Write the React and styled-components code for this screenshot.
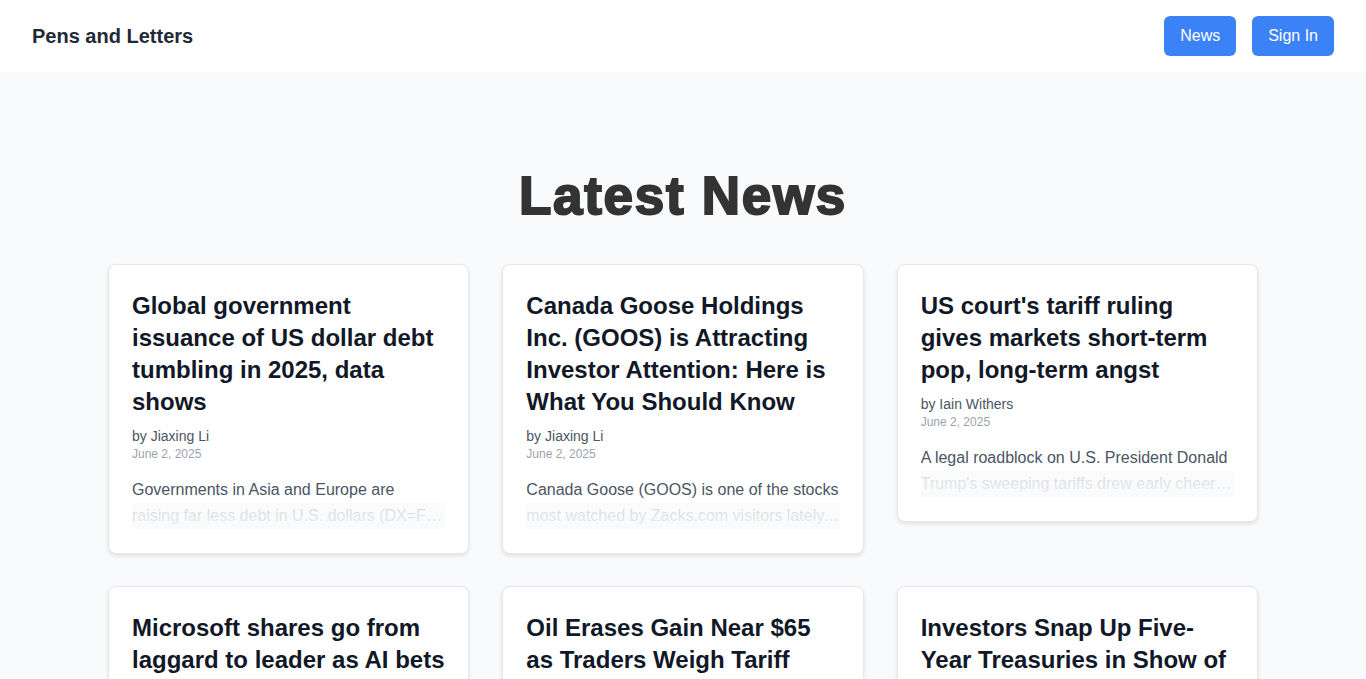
import styled, { createGlobalStyle } from 'styled-components';

const GlobalStyle = createGlobalStyle`
  * {
    box-sizing: border-box;
  }

  body {
    margin: 0;
    background-color: #f9fafb;
    font-family: 'Liberation Sans', Arial, sans-serif;
  }
`;

const Header = styled.header`
  display: flex;
  align-items: center;
  justify-content: space-between;
  height: 72px;
  padding: 0 32px;
  background-color: #ffffff;
`;

const Brand = styled.div`
  font-size: 20px;
  font-weight: 700;
  color: #1f2937;
`;

const Nav = styled.nav`
  display: flex;
  gap: 16px;
`;

const NavButton = styled.button`
  font-family: inherit;
  font-size: 16px;
  line-height: 24px;
  padding: 8px 16px;
  border: 0;
  border-radius: 6px;
  background-color: #3b82f6;
  color: #ffffff;
  cursor: pointer;
`;

const Main = styled.main`
  padding: 93px 108px 48px;
`;

// heavy display weight: thicken the bold face with a stroke
const PageTitle = styled.h1`
  margin: 0 0 38px;
  text-align: center;
  font-size: 53px;
  font-weight: 700;
  letter-spacing: 1.7px;
  color: #333333;
  -webkit-text-stroke: 2px #333333;
`;

const Grid = styled.div`
  display: grid;
  grid-template-columns: repeat(3, 1fr);
  gap: 32px 33px;
  align-items: start;
`;

const Card = styled.article`
  background-color: #ffffff;
  border: 1px solid #e5e7eb;
  border-radius: 8px;
  box-shadow: 0 2px 4px rgba(0, 0, 0, 0.1);
  padding: 25px 23px 24px;
`;

const CardTitle = styled.h2`
  margin: 0;
  font-size: 24px;
  line-height: 32px;
  font-weight: 700;
  color: #111827;
`;

const Author = styled.div`
  margin-top: 8px;
  font-size: 14px;
  line-height: 20px;
  color: #4b5563;
`;

const DateLine = styled.div`
  font-size: 12px;
  line-height: 16px;
  color: #9ca3af;
`;

const Excerpt = styled.div`
  position: relative;
  margin-top: 15px;
  font-size: 16px;
  line-height: 26px;
  color: #4b5563;
`;

const ExcerptText = styled.p`
  margin: 0;
  display: -webkit-box;
  -webkit-line-clamp: 2;
  -webkit-box-orient: vertical;
  overflow: hidden;
`;

const Fade = styled.div`
  position: absolute;
  left: 0;
  right: 0;
  bottom: 0;
  height: 26px;
  background: linear-gradient(to bottom, rgba(249, 250, 251, 0.8), rgba(249, 250, 251, 0.92));
`;

const articles = [
  {
    title: 'Global government issuance of US dollar debt tumbling in 2025, data shows',
    author: 'Jiaxing Li',
    date: 'June 2, 2025',
    excerpt:
      'Governments in Asia and Europe are raising far less debt in U.S. dollars (DX=F) this year as the currency weakens.',
  },
  {
    title: 'Canada Goose Holdings Inc. (GOOS) is Attracting Investor Attention: Here is What You Should Know',
    author: 'Jiaxing Li',
    date: 'June 2, 2025',
    excerpt:
      'Canada Goose (GOOS) is one of the stocks most watched by Zacks.com visitors lately. So, it might be a good idea to review.',
  },
  {
    title: "US court's tariff ruling gives markets short-term pop, long-term angst",
    author: 'Iain Withers',
    date: 'June 2, 2025',
    excerpt:
      "A legal roadblock on U.S. President Donald Trump's sweeping tariffs drew early cheers from investors last week.",
  },
  {
    title: 'Microsoft shares go from laggard to leader as AI bets start to pay off',
    author: 'Jiaxing Li',
    date: 'June 2, 2025',
    excerpt: 'Microsoft shares have rallied as investors warm to its artificial intelligence strategy.',
  },
  {
    title: 'Oil Erases Gain Near $65 as Traders Weigh Tariff Ruling and OPEC+ Supply',
    author: 'Iain Withers',
    date: 'June 2, 2025',
    excerpt: 'Oil gave up earlier gains as traders weighed the outlook for tariffs and supply.',
  },
  {
    title: 'Investors Snap Up Five-Year Treasuries in Show of Demand for Duration',
    author: 'Jiaxing Li',
    date: 'June 2, 2025',
    excerpt: 'Investors piled into the latest five-year note auction despite worries about the deficit.',
  },
];

const App = () => (
  <>
    <GlobalStyle />
    <Header>
      <Brand>Pens and Letters</Brand>
      <Nav>
        <NavButton type="button">News</NavButton>
        <NavButton type="button">Sign In</NavButton>
      </Nav>
    </Header>
    <Main>
      <PageTitle>Latest News</PageTitle>
      <Grid>
        {articles.map(({ title, author, date, excerpt }, index) => (
          <Card key={`${title}_${index}`}>
            <CardTitle>{title}</CardTitle>
            <Author>by {author}</Author>
            <DateLine>{date}</DateLine>
            <Excerpt>
              <ExcerptText>{excerpt}</ExcerptText>
              <Fade />
            </Excerpt>
          </Card>
        ))}
      </Grid>
    </Main>
  </>
);

export default App;
